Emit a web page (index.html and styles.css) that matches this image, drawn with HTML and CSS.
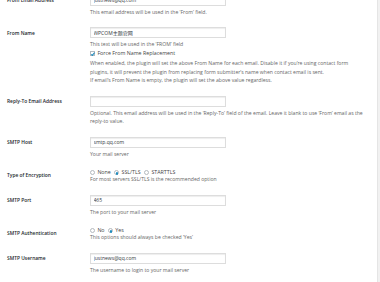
FILE: index.html
```html
<!DOCTYPE html>
<html lang="en">
  <head>
    <meta charset="UTF-8" />
    <meta name="viewport" content="width=device-width, initial-scale=1.0" />
    <title>SMTP Settings</title>
    <link rel="stylesheet" href="styles.css">
  </head>
  <body>
    <div class="wrap">
      <table class="form-table">
        <tr>
          <th>From Email Address</th>
          <td>
            <input type="text" class="regular-text" value="justnews@qq.com" />
            <p class="description">This email address will be used in the ‘From’ field.</p>
          </td>
        </tr>
        <tr>
          <th>From Name</th>
          <td>
            <input type="text" class="regular-text" value="WPCOM主题官网" />
            <p class="description">This text will be used in the ‘FROM’ field</p>
            <fieldset class="options">
              <label><input type="checkbox" checked /> Force From Name Replacement</label>
            </fieldset>
            <p class="description">When enabled, the plugin will set the above From Name for each email. Disable it if you’re using contact form plugins, it will prevent the plugin from replacing form submitter’s name when contact email is sent.<br />If email’s From Name is empty, the plugin will set the above value regardless.</p>
          </td>
        </tr>
        <tr>
          <th>Reply-To Email Address</th>
          <td>
            <input type="text" class="regular-text" value="" />
            <p class="description">Optional. This email address will be used in the ‘Reply-To’ field of the email. Leave it blank to use ‘From’ email as the reply-to value.</p>
          </td>
        </tr>
        <tr>
          <th>SMTP Host</th>
          <td>
            <input type="text" class="regular-text" value="smtp.qq.com" />
            <p class="description">Your mail server</p>
          </td>
        </tr>
        <tr>
          <th>Type of Encryption</th>
          <td>
            <fieldset class="options options-radio">
              <label><input type="radio" name="secure" /> None</label>
              <label><input type="radio" name="secure" checked /> SSL/TLS</label>
              <label><input type="radio" name="secure" /> STARTTLS</label>
            </fieldset>
            <p class="description">For most servers SSL/TLS is the recommended option</p>
          </td>
        </tr>
        <tr>
          <th>SMTP Port</th>
          <td>
            <input type="text" class="regular-text" value="465" />
            <p class="description">The port to your mail server</p>
          </td>
        </tr>
        <tr>
          <th>SMTP Authentication</th>
          <td>
            <fieldset class="options options-radio">
              <label><input type="radio" name="auth" /> No</label>
              <label><input type="radio" name="auth" checked /> Yes</label>
            </fieldset>
            <p class="description">This options should always be checked ‘Yes’</p>
          </td>
        </tr>
        <tr>
          <th>SMTP Username</th>
          <td>
            <input type="text" class="regular-text" value="justnews@qq.com" />
            <p class="description">The username to login to your mail server</p>
          </td>
        </tr>
      </table>
    </div>
  </body>
</html>
```

FILE: styles.css
```css
body {
  margin: 0;
  background: #f1f1f1;
  font-family: "Open Sans", "Noto Sans CJK SC", sans-serif;
  color: #444;
}
.wrap {
  width: 377px;
  height: 282px;
  overflow: hidden;
  background: #fff;
  border-right: 1px solid #e5e5e5;
}
.form-table {
  width: 100%;
  margin-top: -10.7px;
  border-collapse: collapse;
  table-layout: fixed;
}
.form-table th {
  width: 83px;
  padding: 7px 0 0 7px;
  text-align: left;
  vertical-align: top;
  font-size: 4.9px;
  line-height: 8px;
  font-weight: 600;
  color: #23282d;
}
.form-table td {
  padding: 5.5px 11px 5.5px 0;
  vertical-align: top;
}
.regular-text {
  display: block;
  box-sizing: border-box;
  width: 136px;
  height: 11px;
  margin: 0;
  padding: 0 2.5px;
  border: 1px solid #ddd;
  box-shadow: inset 0 1px 1px rgba(0, 0, 0, 0.07);
  font: 5px "Open Sans", "Noto Sans CJK SC", sans-serif;
  color: #32373c;
  outline: none;
}
.description {
  margin: 2px 0 0;
  font-size: 5.1px;
  line-height: 8.5px;
  color: #666;
}
.options {
  margin: 0;
  padding: 0;
  border: 0;
  font-size: 5.3px;
  line-height: 8.5px;
  color: #444;
}
.options-radio {
  height: 5px;
  line-height: 6px;
}
.options-radio + .description {
  margin-top: 1px;
}
.options label {
  margin-right: 2px;
}
.options input {
  appearance: none;
  position: relative;
  box-sizing: border-box;
  width: 5px;
  height: 5px;
  margin: 0 1px 0 0;
  border: 0.6px solid #b4b9be;
  background: #fff;
  vertical-align: -1px;
}
.options input[type="radio"] {
  border-radius: 50%;
}
.options input[type="radio"]:checked::before {
  content: "";
  position: absolute;
  left: 1px;
  top: 1px;
  width: 2.2px;
  height: 2.2px;
  border-radius: 50%;
  background: #1e8cbe;
}
.options input[type="checkbox"]:checked::before {
  content: "";
  position: absolute;
  left: 1.3px;
  top: 0.1px;
  width: 1.4px;
  height: 2.6px;
  border-right: 0.8px solid #1e8cbe;
  border-bottom: 0.8px solid #1e8cbe;
  transform: rotate(40deg);
}
```
